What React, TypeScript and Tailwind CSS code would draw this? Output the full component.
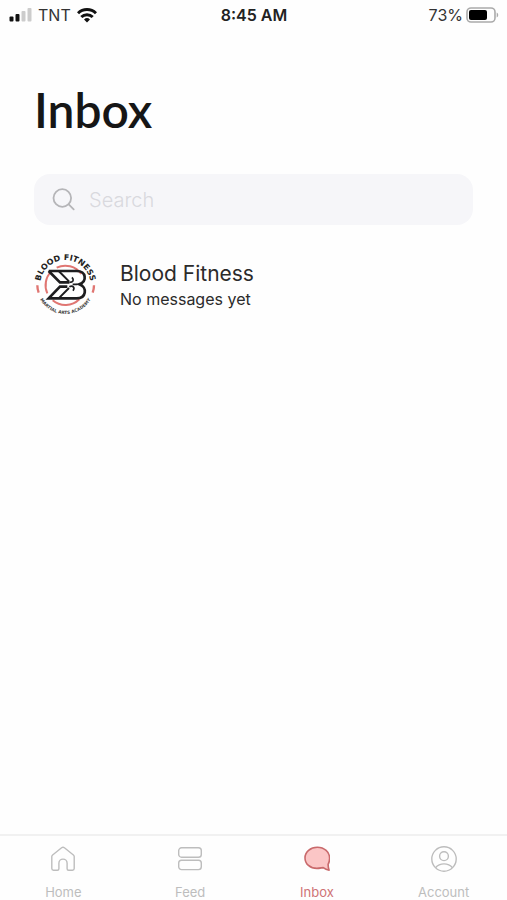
import React, { useState } from "react";

const HomeIcon = () => (
  <svg viewBox="0 0 26 26" className="h-[26px] w-[26px]" fill="none" stroke="currentColor" strokeWidth="1.4" strokeLinejoin="round">
    <path d="M1.8 10.6c0-.7.3-1.2.8-1.6l9-7.2c.9-.7 1.9-.7 2.8 0l9 7.2c.5.4.8.9.8 1.6v11.9c0 1-.7 1.7-1.7 1.7h-3.9c-.9 0-1.5-.6-1.5-1.5v-5.5a4.1 4.1 0 0 0-8.2 0v5.5c0 .9-.6 1.5-1.5 1.5H3.5c-1 0-1.7-.7-1.7-1.7z" />
  </svg>
);

const FeedIcon = () => (
  <svg viewBox="0 0 26 26" className="h-[26px] w-[26px]" fill="none" stroke="currentColor" strokeWidth="1.4">
    <rect x="1.7" y="1.8" width="22.6" height="9.4" rx="2.8" />
    <rect x="1.7" y="14.2" width="22.6" height="9.4" rx="2.8" />
  </svg>
);

const InboxIcon = () => (
  <svg viewBox="0 0 26 26" className="h-[26px] w-[26px]" fill="#fbc6c6" stroke="#c96a6c" strokeWidth="1.6" strokeLinejoin="round">
    <path d="M13.3 1.3C6.4 1.3 1 6 1 11.9c0 6 5.2 10.5 11.9 10.5 2.5 0 4.5-.6 6.3-.8 1.6 1.2 3.5 2.2 5.9 2.6-.7-2-1-3.6-1-5.8 1-1.9 1.5-4 1.5-6.2C25.6 6.1 20.4 1.3 13.3 1.3z" />
  </svg>
);

const AccountIcon = () => (
  <svg viewBox="0 0 26 26" className="h-[26px] w-[26px]" fill="none" stroke="currentColor" strokeWidth="1.4">
    <circle cx="13" cy="13" r="12.2" />
    <circle cx="13" cy="10.2" r="4.4" />
    <path d="M4.5 21.7c2.1-2.5 5.1-3.8 8.5-3.8s6.4 1.3 8.5 3.8" />
  </svg>
);

const ClubLogo = () => (
  <svg viewBox="24 21 192 192" className="h-16 w-16 shrink-0 overflow-visible" fill="none" role="img" aria-label="Blood Fitness">
    <defs>
      <path id="ring-top" d="M42 118a76 76 0 0 1 152 0" />
      <path id="ring-bottom" d="M30 116a88 88 0 0 0 176 0" />
    </defs>
    <text fill="#222" fontFamily="'DejaVu Sans', sans-serif" fontWeight="700" fontSize="24">
      <textPath href="#ring-top" startOffset="50%" textAnchor="middle">
        BLOOD FITNESS
      </textPath>
    </text>
    <text fill="#444" fontFamily="'DejaVu Sans', sans-serif" fontWeight="700" fontSize="13">
      <textPath href="#ring-bottom" startOffset="50%" textAnchor="middle">
        MARTIAL ARTS ACADEMY
      </textPath>
    </text>
    <g stroke="#e07672" strokeWidth="6">
      <path d="M76 76A59 59 0 0 0 64 142" />
      <path d="M92 65A59 59 0 0 1 166 84" />
      <path d="M80 163A59 59 0 0 0 160 160" />
      <path d="M34 118q0 11 4 22" strokeWidth="7" />
      <path d="M204 118q0 11-4 22" strokeWidth="7" />
    </g>
    <g stroke="#1d1d1f" strokeWidth="8">
      <path d="M68 75h84c29 0 32 31 8 40 25 9 21 42-8 42H68l34-35h22" />
      <path d="M68 75l34 34h28" />
      <path d="M98 75l31 31M98 157l31-31" strokeWidth="6" />
      <path d="M130 109c12 0 15-7 8-15M130 122c10-5 18 2 11 12M140 115h14" strokeWidth="5" />
    </g>
  </svg>
);

const StatusBar = () => (
  <header className="grid h-[30px] grid-cols-3 items-center pr-2 pl-[9px] text-base text-[#333]">
    <div className="flex items-center gap-[6px]">
      <svg viewBox="0 0 23 14" className="h-[14px] w-[23px]" aria-label="Signal">
        <rect x="0.5" y="8.5" width="4" height="5" rx="1" fill="#111" />
        <rect x="6.5" y="6" width="4" height="7.5" rx="1" fill="#111" />
        <rect x="12.5" y="3" width="4" height="10.5" rx="1" fill="#ccc" />
        <rect x="18.5" y="0" width="4" height="13.5" rx="1" fill="#ccc" />
      </svg>
      <span>TNT</span>
      <svg viewBox="0 0 20 15" className="h-[15px] w-5" fill="none" stroke="#111" strokeWidth="3" aria-label="Wi-Fi">
        <path d="M1 5.3a12.8 12.8 0 0 1 18 0" />
        <path d="M4.3 9a8.2 8.2 0 0 1 11.4 0" />
        <path d="M10 14.6l-3-3.1a4.3 4.3 0 0 1 6 0z" fill="#111" stroke="none" />
      </svg>
    </div>
    <span className="text-center font-semibold text-[#222]">8:45 AM</span>
    <div className="flex items-center justify-end gap-[3px]">
      <span>73%</span>
      <svg viewBox="0 0 33 16" className="h-4 w-[33px]" fill="none" aria-label="Battery">
        <rect x="1" y="1" width="28" height="14" rx="4" stroke="#aaa" strokeWidth="1.6" />
        <rect x="3" y="3" width="18" height="10" rx="2" fill="#000" />
        <path d="M30.7 5.5c2 .8 2 4.2 0 5z" fill="#aaa" />
      </svg>
    </div>
  </header>
);

const tabs = [
  { name: "Home", icon: HomeIcon },
  { name: "Feed", icon: FeedIcon },
  { name: "Inbox", icon: InboxIcon },
  { name: "Account", icon: AccountIcon },
];

const App = () => {
  const [activeTab, setActiveTab] = useState("Inbox");
  const [query, setQuery] = useState("");

  return (
    <div className="flex min-h-screen flex-col bg-[#fefefe] font-['Inter',sans-serif]">
      <StatusBar />

      <main className="flex-1 px-[34px] pt-[50px]">
        <h1 className="font-['Lato',sans-serif] text-5xl leading-[60px] font-semibold text-[#161616]">
          Inbox
        </h1>

        <label className="mt-[34px] flex h-[51px] items-center gap-[14px] rounded-2xl bg-[#f6f6f9] px-[18px]">
          <svg viewBox="0 0 23 23" className="h-[23px] w-[23px] shrink-0" fill="none" stroke="#b5b5b8" strokeWidth="1.8" strokeLinecap="round">
            <circle cx="10.3" cy="10" r="8.8" />
            <path d="M16.7 16.4l5 5" />
          </svg>
          <input
            type="text"
            aria-label="Search"
            placeholder="Search"
            value={query}
            onChange={(e) => setQuery(e.target.value)}
            className="min-w-0 flex-1 bg-transparent text-xl font-light text-[#333] outline-none placeholder:text-[#d9d9de]"
          />
        </label>

        <a href="#blood-fitness" className="mt-7 flex items-center gap-[22px]">
          <ClubLogo />
          <div className="text-[#2b2b2b]">
            <h2 className="text-[21px] leading-7">Blood Fitness</h2>
            <p className="text-base leading-[22px]">No messages yet</p>
          </div>
        </a>
      </main>

      <nav className="grid h-[66px] grid-cols-4 border-t-2 border-[#f1f1f1]">
        {tabs.map(({ name, icon: Icon }) => (
          <button
            key={name}
            type="button"
            onClick={() => setActiveTab(name)}
            className={`flex flex-col items-center gap-3 pt-[10px] text-[13px] leading-4 ${
              activeTab === name ? "text-[#cf7376]" : "text-[#bdbdbd]"
            }`}
          >
            <Icon />
            <span>{name}</span>
          </button>
        ))}
      </nav>
    </div>
  );
};

export default App;
